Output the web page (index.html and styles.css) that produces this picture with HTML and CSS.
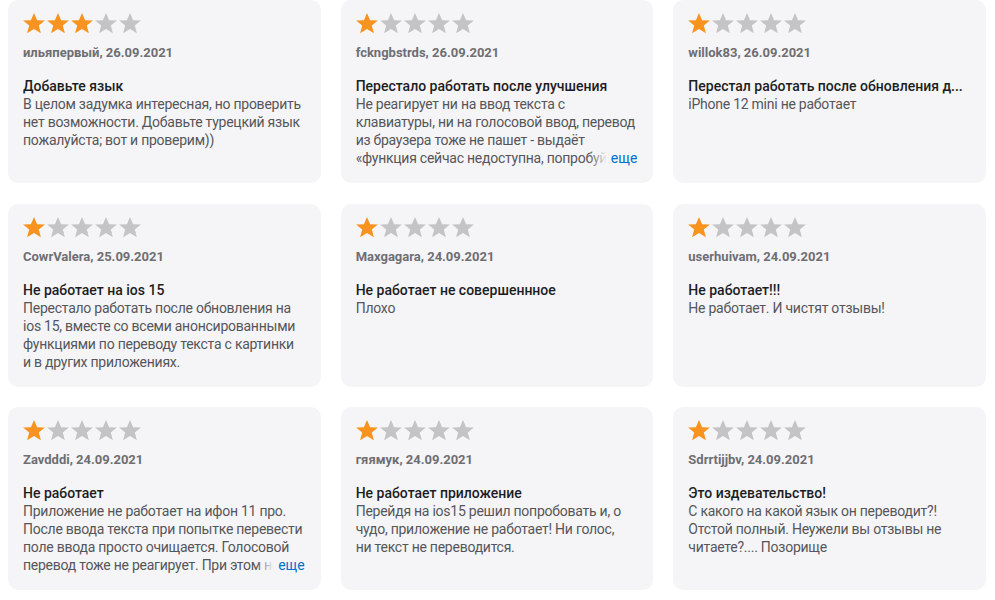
FILE: index.html
```html
<!DOCTYPE html>
<html lang="ru">
<head>
<meta charset="utf-8">
<title>Отзывы</title>
<link rel="stylesheet" href="styles.css">
</head>
<body>
<svg width="0" height="0" class="defs" aria-hidden="true">
  <defs>
    <symbol id="star" viewBox="0 0 24 24">
      <polygon points="12,1 15.1,8.2 22.9,8.6 16.8,13.6 18.9,21.2 12,17 5.1,21.2 7.2,13.6 1.1,8.6 8.9,8.2"/>
    </symbol>
  </defs>
</svg>
<main class="reviews">
  <article class="card">
    <div class="stars">
      <svg class="star on"><use href="#star"/></svg><svg class="star on"><use href="#star"/></svg><svg class="star on"><use href="#star"/></svg><svg class="star"><use href="#star"/></svg><svg class="star"><use href="#star"/></svg>
    </div>
    <div class="meta">ильяпервый, 26.09.2021</div>
    <h3 class="title">Добавьте язык</h3>
    <div class="body"><p>В целом задумка интересная, но проверить нет возможности. Добавьте турецкий язык пожалуйста; вот и проверим))</p></div>
  </article>

  <article class="card">
    <div class="stars">
      <svg class="star on"><use href="#star"/></svg><svg class="star"><use href="#star"/></svg><svg class="star"><use href="#star"/></svg><svg class="star"><use href="#star"/></svg><svg class="star"><use href="#star"/></svg>
    </div>
    <div class="meta">fckngbstrds, 26.09.2021</div>
    <h3 class="title">Перестало работать после улучшения</h3>
    <div class="body clamped"><p>Не реагирует ни на ввод текста с клавиатуры, ни на голосовой ввод, перевод из браузера тоже не пашет - выдаёт «функция сейчас недоступна, попробуйте позже» и ничего не происходит.</p><button class="more">еще</button></div>
  </article>

  <article class="card">
    <div class="stars">
      <svg class="star on"><use href="#star"/></svg><svg class="star"><use href="#star"/></svg><svg class="star"><use href="#star"/></svg><svg class="star"><use href="#star"/></svg><svg class="star"><use href="#star"/></svg>
    </div>
    <div class="meta">willok83, 26.09.2021</div>
    <h3 class="title">Перестал работать после обновления д...</h3>
    <div class="body"><p>iPhone 12 mini не работает</p></div>
  </article>

  <article class="card">
    <div class="stars">
      <svg class="star on"><use href="#star"/></svg><svg class="star"><use href="#star"/></svg><svg class="star"><use href="#star"/></svg><svg class="star"><use href="#star"/></svg><svg class="star"><use href="#star"/></svg>
    </div>
    <div class="meta">CowrValera, 25.09.2021</div>
    <h3 class="title">Не работает на ios 15</h3>
    <div class="body"><p>Перестало работать после обновления на ios 15, вместе со всеми анонсированными функциями по переводу текста с картинки и в других приложениях.</p></div>
  </article>

  <article class="card">
    <div class="stars">
      <svg class="star on"><use href="#star"/></svg><svg class="star"><use href="#star"/></svg><svg class="star"><use href="#star"/></svg><svg class="star"><use href="#star"/></svg><svg class="star"><use href="#star"/></svg>
    </div>
    <div class="meta">Maxgagara, 24.09.2021</div>
    <h3 class="title">Не работает не совершеннное</h3>
    <div class="body"><p>Плохо</p></div>
  </article>

  <article class="card">
    <div class="stars">
      <svg class="star on"><use href="#star"/></svg><svg class="star"><use href="#star"/></svg><svg class="star"><use href="#star"/></svg><svg class="star"><use href="#star"/></svg><svg class="star"><use href="#star"/></svg>
    </div>
    <div class="meta">userhuivam, 24.09.2021</div>
    <h3 class="title">Не работает!!!</h3>
    <div class="body"><p>Не работает. И чистят отзывы!</p></div>
  </article>

  <article class="card">
    <div class="stars">
      <svg class="star on"><use href="#star"/></svg><svg class="star"><use href="#star"/></svg><svg class="star"><use href="#star"/></svg><svg class="star"><use href="#star"/></svg><svg class="star"><use href="#star"/></svg>
    </div>
    <div class="meta">Zavdddi, 24.09.2021</div>
    <h3 class="title">Не работает</h3>
    <div class="body clamped"><p>Приложение не работает на ифон 11 про. После ввода текста при попытке перевести поле ввода просто очищается. Голосовой перевод тоже не реагирует. При этом на других устройствах всё работает.</p><button class="more">еще</button></div>
  </article>

  <article class="card">
    <div class="stars">
      <svg class="star on"><use href="#star"/></svg><svg class="star"><use href="#star"/></svg><svg class="star"><use href="#star"/></svg><svg class="star"><use href="#star"/></svg><svg class="star"><use href="#star"/></svg>
    </div>
    <div class="meta">гяямук, 24.09.2021</div>
    <h3 class="title">Не работает приложение</h3>
    <div class="body"><p>Перейдя на ios15 решил попробовать и, о чудо, приложение не работает! Ни голос, ни&nbsp;текст не переводится.</p></div>
  </article>

  <article class="card">
    <div class="stars">
      <svg class="star on"><use href="#star"/></svg><svg class="star"><use href="#star"/></svg><svg class="star"><use href="#star"/></svg><svg class="star"><use href="#star"/></svg><svg class="star"><use href="#star"/></svg>
    </div>
    <div class="meta">Sdrrtijjbv, 24.09.2021</div>
    <h3 class="title">Это издевательство!</h3>
    <div class="body"><p>С какого на какой язык он переводит?! Отстой полный. Неужели вы отзывы не читаете?.... Позорище</p></div>
  </article>
</main>
</body>
</html>
```

FILE: styles.css
```css
* { box-sizing: border-box; }

html, body {
  margin: 0;
  padding: 0;
  background: #ffffff;
}

body {
  font-family: Roboto, "Noto Sans", "Liberation Sans", sans-serif;
  -webkit-font-smoothing: antialiased;
}

.defs {
  position: absolute;
  width: 0;
  height: 0;
}

.reviews {
  display: grid;
  grid-template-columns: repeat(3, 1fr);
  grid-auto-rows: 183px;
  column-gap: 20px;
  row-gap: 20.5px;
  padding: 0 9px 0 8px;
}

.card {
  background: #f5f5f7;
  border-radius: 10px;
  padding: 12px 16px 0 15px;
  overflow: hidden;
  min-width: 0;
}

.stars {
  display: flex;
  height: 24px;
  margin-left: -1px;
}

.star {
  width: 24px;
  height: 24px;
  fill: #c4c4c6;
  flex: none;
}

.star.on {
  fill: #f7931e;
}

.meta {
  margin-top: 8px;
  font-size: 13px;
  line-height: 18px;
  font-weight: 700;
  color: #6e6e73;
  white-space: nowrap;
}

.title {
  margin: 15px 0 0;
  font-size: 14px;
  line-height: 18px;
  font-weight: 500;
  color: #1d1d1f;
  white-space: nowrap;
  overflow: hidden;
  text-overflow: ellipsis;
}

.body {
  position: relative;
  font-size: 14px;
  line-height: 18px;
  letter-spacing: -0.25px;
  color: #56565a;
  max-height: 72px;
  overflow: hidden;
}

.body p {
  margin: 0;
}

.more {
  position: absolute;
  right: 0;
  bottom: 0;
  height: 18px;
  margin: 0;
  border: 0;
  padding: 0 0 0 22px;
  font: inherit;
  letter-spacing: 0;
  line-height: 18px;
  color: #0070c9;
  background: linear-gradient(to right, rgba(245, 245, 247, 0) 0, #f5f5f7 18px);
  cursor: pointer;
}
```
